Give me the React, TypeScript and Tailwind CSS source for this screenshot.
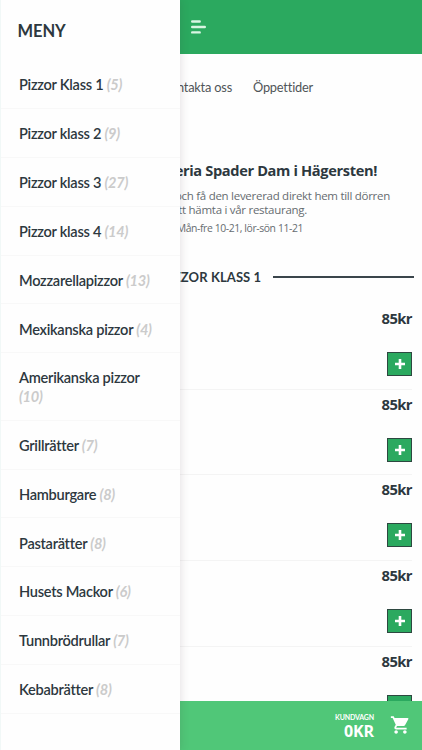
import { MdShoppingCart } from "react-icons/md";

const categories = [
  { name: "Pizzor Klass 1", count: 5 },
  { name: "Pizzor klass 2", count: 9 },
  { name: "Pizzor klass 3", count: 27 },
  { name: "Pizzor klass 4", count: 14 },
  { name: "Mozzarellapizzor", count: 13 },
  { name: "Mexikanska pizzor", count: 4 },
  { name: "Amerikanska pizzor", count: 10 },
  { name: "Grillrätter", count: 7 },
  { name: "Hamburgare", count: 8 },
  { name: "Pastarätter", count: 8 },
  { name: "Husets Mackor", count: 6 },
  { name: "Tunnbrödrullar", count: 7 },
  { name: "Kebabrätter", count: 8 },
];

const prices = [85, 85, 85, 85, 85];

function CategoryDrawer() {
  return (
    <aside className="absolute inset-y-0 left-0 z-20 w-[180px] border-l border-[#f1f8f7] bg-[#fefefe] shadow-[0_0_9px_rgba(60,40,50,0.16)]">
      <h2 className="h-[60px] pl-[16.5px] pt-[20px] text-[16.5px] font-bold leading-[22px] tracking-[-0.1px] text-[#2d383e]">MENY</h2>
      <ul>
        {categories.map((category) => (
          <li
            key={category.name}
            className="border-b border-[#f8f8f8] pb-[13.4px] pl-[18px] pr-[20px] pt-[16.1px] text-[14.6px] font-semibold leading-[18.4px] tracking-[-0.28px] text-[#2d383e]"
          >
            {category.name} <span className="font-bold italic text-[#cbcbcb]">({category.count})</span>
          </li>
        ))}
      </ul>
    </aside>
  );
}

function MenuRow({ price }: { price: number }) {
  return (
    <li className="ml-2 mr-[10px] flex h-[85.8px] flex-col items-end border-b border-[#f4f4f4] pt-[4px] font-['Open_Sans',sans-serif]">
      <span className="text-[14.8px] font-bold leading-[21px] tracking-[-0.6px] text-[#2d383e]">{price}kr</span>
      <button className="mt-[23px] flex h-6 w-[25px] items-center justify-center border-[1.5px] border-[#2d4840] bg-[#2ba95f] text-white">
        <svg width="10" height="10" viewBox="0 0 10 10" fill="none" stroke="currentColor" strokeWidth="2.6">
          <path d="M5 0v10M0 5h10" />
        </svg>
      </button>
    </li>
  );
}

function CartBar() {
  return (
    <footer className="absolute inset-x-0 bottom-0 z-10 flex h-[49px] justify-end bg-[#50c778] pr-[11px] text-white">
      <div className="pt-[12px] text-right">
        <div className="text-[7px] font-bold leading-[9px] tracking-[-0.15px]">KUNDVAGN</div>
        <div className="font-['Open_Sans',sans-serif] text-[16px] font-bold leading-[18px] tracking-[-0.1px]">0KR</div>
      </div>
      <MdShoppingCart className="ml-4 mt-[13px] h-[22px] w-[21px]" />
    </footer>
  );
}

export default function App() {
  return (
    <div className="relative h-[750px] w-[422px] overflow-hidden bg-[#fefefe] font-[Lato,sans-serif] tracking-[-0.3px]">
      <header className="flex h-[54px] bg-[#2ba95f] pl-[191px] pt-[20px]">
        <svg width="15" height="14" viewBox="0 0 15 14" stroke="#d9f5e3" strokeWidth="2.4" strokeLinecap="round">
          <path d="M1.2 1.5h7.5M1.2 7h12.6M1.2 12.4h7.5" />
        </svg>
      </header>

      <nav className="flex h-[66px] items-center justify-end gap-[21px] pr-[109px] pt-[2px] text-[12.8px] tracking-[-0.2px] text-[#505558]">
        <a>Kontakta oss</a>
        <a>Öppettider</a>
      </nav>

      <section className="whitespace-nowrap pt-[40px] text-right font-['Open_Sans',sans-serif]">
        <h1 className="pr-[45px] text-[14.6px] font-bold leading-[21px] tracking-[-0.35px] text-[#2d383e]">Pizzeria Spader Dam i Hägersten!</h1>
        <p className="mt-[8px] pr-[32px] text-[11.5px] leading-[14px] tracking-[-0.28px] text-[#666c70]">och få den levererad direkt hem till dörren</p>
        <p className="pr-[115px] text-[11.5px] leading-[14px] tracking-[-0.28px] text-[#666c70]">att hämta i vår restaurang.</p>
        <p className="mt-[4px] pr-[119px] text-[10.4px] leading-[14px] tracking-[-0.4px] text-[#666c70]">Mån-fre 10-21, lör-sön 11-21</p>
      </section>

      <div className="mt-[32px] flex h-[20px] items-center gap-3 px-2">
        <span className="h-[2px] flex-1 bg-[#3a454b]" />
        <h2 className="pt-[2px] text-[13px] font-bold tracking-[0.1px] text-[#2d383e]">PIZZOR KLASS 1</h2>
        <span className="h-[2px] flex-1 bg-[#3a454b]" />
      </div>

      <ul className="mt-[16.9px]">
        {prices.map((price, i) => (
          <MenuRow key={i} price={price} />
        ))}
      </ul>

      <CartBar />
      <CategoryDrawer />
    </div>
  );
}
